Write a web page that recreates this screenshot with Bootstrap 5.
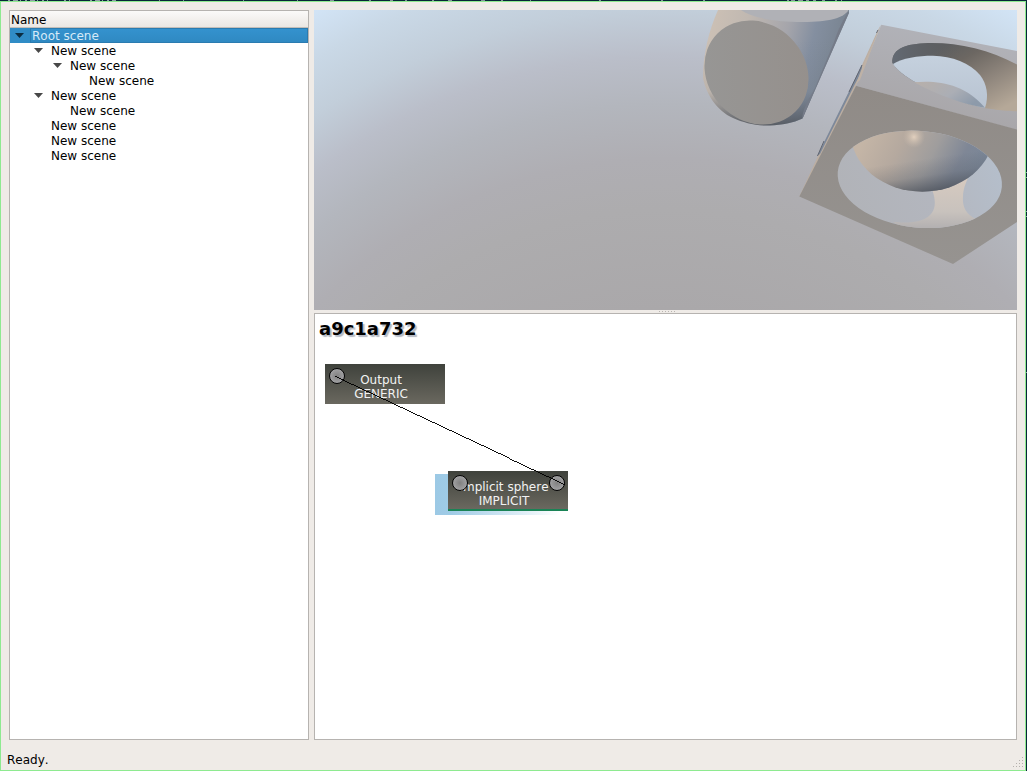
<!DOCTYPE html>
<html lang="en">
<head>
<meta charset="utf-8">
<title>Scene editor</title>
<link rel="stylesheet" href="https://cdn.jsdelivr.net/npm/bootstrap@5.3.0/dist/css/bootstrap.min.css">
<style>
body{font:12px/15px "DejaVu Sans",sans-serif;font-kerning:none;color:#000;background:#062637;overflow:hidden}
.desk-edge{height:1px;background:#062637}
.desk-edge svg{display:block}
.desk-side{width:1px}
.win{width:1026px;height:770px;border:1px solid #8eea90;background:#efebe7;padding:8px 8px 0}
.work{height:730px;gap:5px;flex:none}
.tree-pane{width:300px;border:1px solid #b6b3b0;background:#fff}
.tree-head{height:17px;line-height:18px;padding-left:1px;background:linear-gradient(#fbfaf9,#ebe7e3);border-bottom:1px solid #c3beb9}
.tree-row{height:15px;line-height:17px;white-space:nowrap;padding-left:calc(3px + var(--lv)*19px)}
.tree-row i{width:19px;height:15px;flex:none;display:flex;align-items:center;padding-left:2px}
.tree-row i svg{display:block}
.tree-row.sel{background:#308cc6;color:#d6eaf8}
.tree-row.sel span{flex:1;height:15px;border:1px solid #2a7bb0;margin-left:-2px;padding-left:1px;line-height:15px;background:linear-gradient(#3492ce,#2f89c2)}
.view3d{height:300px;display:block}
.split{height:3px}
.graph{border:1px solid #b6b3b0;background:#fff}
.graph h1{font-size:18px;font-weight:bold;line-height:22px;color:#000;margin:4px 0 0 4px;text-shadow:2px 2px 1px #b4bac4}
.gnode{width:120px;height:40px;background:linear-gradient(#3f423c,#6a685f);color:#f2f2f2;line-height:14px;padding:9px 8px 0 0}
.gnode.active{border-bottom:2px solid #1a8356}
.glow{width:125px;height:41px;background:linear-gradient(90deg,#9cc9e5,#9fcbe6 12%,#fff)}
.status{height:30px;line-height:15px;padding:13px 0 0 0;margin-left:-2px}
</style>
</head>
<body>
<div class="desk-edge"><svg width="1027" height="1"><path d="M8 .5H48M64 .5H70M90 .5H116" stroke="#8d9da5" stroke-dasharray="2 3 5 2 1 4"/><path d="M159 .5h1M183 .5h1M243 .5h1M297 .5h1M330 .5h4M369 .5h2M390 .5h3M405 .5h2M432 .5h2M448 .5h4M481 .5h4M501 .5h2M530 .5h1M599 .5h2M661 .5h2M703 .5h2M787 .5h2M791 .5h4M798 .5h5M806 .5h3M813 .5h3M822 .5h3M835 .5h2M841 .5h1" stroke="#84949c"/></svg></div>
<div class="d-flex">
<div class="win d-flex flex-column flex-shrink-0">
  <div class="work d-flex">
    <div class="tree-pane d-flex flex-column">
      <div class="tree-head">Name</div>
      <div class="tree-row sel d-flex" style="--lv:0"><i><svg width="9" height="5"><path d="M0 0H9L4.500 5Z" fill="#0b2c40"/></svg></i><span>Root scene</span></div>
      <div class="tree-row d-flex" style="--lv:1"><i><svg width="9" height="5"><path d="M0 0H9L4.500 5Z" fill="#484848"/></svg></i>New scene</div>
      <div class="tree-row d-flex" style="--lv:2"><i><svg width="9" height="5"><path d="M0 0H9L4.500 5Z" fill="#484848"/></svg></i>New scene</div>
      <div class="tree-row d-flex" style="--lv:3"><i></i>New scene</div>
      <div class="tree-row d-flex" style="--lv:1"><i><svg width="9" height="5"><path d="M0 0H9L4.500 5Z" fill="#484848"/></svg></i>New scene</div>
      <div class="tree-row d-flex" style="--lv:2"><i></i>New scene</div>
      <div class="tree-row d-flex" style="--lv:1"><i></i>New scene</div>
      <div class="tree-row d-flex" style="--lv:1"><i></i>New scene</div>
      <div class="tree-row d-flex" style="--lv:1"><i></i>New scene</div>
    </div>
    <div class="d-flex flex-column" style="width:703px">
      <svg class="view3d" width="703" height="300" viewBox="314 10 703 300">
        <defs>
          <radialGradient id="sky" gradientUnits="userSpaceOnUse" cx="665" cy="644" r="725">
            <stop offset="0" stop-color="#aaa8aa"/><stop offset=".46" stop-color="#aaa8aa"/><stop offset=".6" stop-color="#adacae"/><stop offset=".67" stop-color="#afaeb3"/><stop offset=".745" stop-color="#b3b6bd"/><stop offset=".81" stop-color="#babec9"/><stop offset=".875" stop-color="#c2ceda"/><stop offset=".94" stop-color="#c9d8e6"/><stop offset="1" stop-color="#d2e4f6"/>
          </radialGradient>
          <linearGradient id="cyl" gradientUnits="userSpaceOnUse" x1="704" y1="30" x2="835" y2="62">
            <stop offset="0" stop-color="#cdc1b5"/><stop offset=".3" stop-color="#c0b8b1"/><stop offset=".6" stop-color="#a5a5ab"/><stop offset=".8" stop-color="#848fa0"/><stop offset="1" stop-color="#7a8592"/>
          </linearGradient>
          <linearGradient id="cylDark" gradientUnits="userSpaceOnUse" x1="0" y1="40" x2="0" y2="126">
            <stop offset="0" stop-color="#59606a" stop-opacity="0"/><stop offset=".6" stop-color="#59606a" stop-opacity=".1"/><stop offset="1" stop-color="#50555c" stop-opacity=".9"/>
          </linearGradient>
          <linearGradient id="disc" x1="1" y1="0" x2="0" y2="1"><stop offset="0" stop-color="#958f8b"/><stop offset="1" stop-color="#979796"/></linearGradient>
          <linearGradient id="plate" gradientUnits="userSpaceOnUse" x1="930" y1="30" x2="915" y2="110"><stop offset="0" stop-color="#b1b2b8"/><stop offset="1" stop-color="#a9a7aa"/></linearGradient>
          <linearGradient id="bore" gradientUnits="userSpaceOnUse" x1="945" y1="45" x2="985" y2="118"><stop offset="0" stop-color="#5d5e5f"/><stop offset=".25" stop-color="#6c6762"/><stop offset=".6" stop-color="#8e857c"/><stop offset="1" stop-color="#b5a898"/></linearGradient>
          <linearGradient id="boreLeft" gradientUnits="userSpaceOnUse" x1="892" y1="0" x2="960" y2="0"><stop offset="0" stop-color="#636a74"/><stop offset="1" stop-color="#5b5d60" stop-opacity="0"/></linearGradient>
          <linearGradient id="front" gradientUnits="userSpaceOnUse" x1="0" y1="90" x2="0" y2="264"><stop offset="0" stop-color="#908b87"/><stop offset="1" stop-color="#969390"/></linearGradient>
          <linearGradient id="ball" gradientUnits="userSpaceOnUse" x1="872" y1="125" x2="975" y2="178"><stop offset="0" stop-color="#c4b5a6"/><stop offset=".3" stop-color="#b5a99f"/><stop offset=".58" stop-color="#9f9d9d"/><stop offset=".82" stop-color="#7f8796"/><stop offset="1" stop-color="#7a8697"/></linearGradient>
          <linearGradient id="ballShade" gradientUnits="userSpaceOnUse" x1="917" y1="160" x2="922" y2="193"><stop offset="0" stop-color="#555b65" stop-opacity="0"/><stop offset=".5" stop-color="#555b65" stop-opacity=".25"/><stop offset="1" stop-color="#50555e" stop-opacity=".85"/></linearGradient>
          <radialGradient id="spec"><stop offset="0" stop-color="#e2d0be"/><stop offset="1" stop-color="#c8b9aa" stop-opacity="0"/></radialGradient>
          <linearGradient id="stem" x1="0" y1="0" x2="0" y2="1"><stop offset="0" stop-color="#d8cbc0"/><stop offset=".65" stop-color="#c8c2bd"/><stop offset="1" stop-color="#aeacae"/></linearGradient>
          <linearGradient id="ballTop" x1="0" y1="0" x2="1" y2=".5"><stop offset="0" stop-color="#b8b0aa"/><stop offset=".6" stop-color="#abaeb5"/><stop offset="1" stop-color="#8d9aaa"/></linearGradient>
          <linearGradient id="holeSky" gradientUnits="userSpaceOnUse" x1="1000" y1="150" x2="850" y2="215"><stop offset="0" stop-color="#b5bfcc"/><stop offset=".5" stop-color="#b3b6be"/><stop offset="1" stop-color="#b1b3b8"/></linearGradient>
          <linearGradient id="farSky" x1="0" y1="0" x2="0" y2="1"><stop offset="0" stop-color="#c5d1de"/><stop offset="1" stop-color="#b8c3d1"/></linearGradient>
          <clipPath id="hole"><ellipse cx="919.8" cy="179.3" rx="82.4" ry="48.3" transform="rotate(5.3 919.8 179.3)"/></clipPath>
        </defs>
        <rect x="314" y="10" width="703" height="300" fill="url(#sky)"/>

        <g id="cylinder">
          <path d="M718 10C709 30 703 54 703 78C706 94 717 111 733 118C744 123 757 126 770 125.500C782 125 793 123 802.500 118.500L849 13V10Z" fill="url(#cyl)"/>
          <path d="M718 10C709 30 703 54 703 78C706 94 717 111 733 118C744 123 757 126 770 125.500C782 125 793 123 802.500 118.500L849 13V10Z" fill="url(#cylDark)"/>
          <path d="M849 12.500L802.500 118.500C802 112 806 104 815 88L834 42C838 30 842 22 848 12Z" fill="#757b88"/>
          <path d="M741 10C753 18 775 22 803 22C829 22 844 18 848.500 10Z" fill="#b0b1b6"/>
          <ellipse cx="756.500" cy="72.500" rx="55.200" ry="48.600" transform="rotate(45 756.500 72.500)" fill="url(#disc)"/>
        </g>

        <g id="box">
          <path d="M881 24.700L878 30L862 65L818 156L799.300 196.500L802 194L856 86Z" fill="#bcaea1"/>
          <path d="M862 65L817.500 155.500L820 154L855 84L862 71Z" fill="#7d899b"/>
          <path d="M862 65L849 92M878 30L876.500 33M817.500 156L824 141" stroke="#606570" fill="none"/>
          <path d="M881.300 24.700L1017 51V130L856 85.700Z" fill="url(#plate)"/>
          <path d="M880.500 25.500L862.500 66.500L856 84L860 80Z" fill="#bfb2a6"/>
          <path d="M892.500 63C891 47 910 43 932 43C960 43 990 50 1017 64.500V111.300C1004 111 985 108.500 983 107.500C963 104 942 95 917 83C904 76 896 69 892.500 63Z" fill="url(#bore)"/>
          <path d="M892.500 63C891 47 910 43 932 43C944 43 954 44 964 46V70H900Z" fill="url(#boreLeft)"/>
          <path d="M893 64C902 58 918 55.700 933 55.700C952 56 970 63 980 75C987 84 989 96 985 108C963 104 942 95 917 83C904 76 896 69 893 64Z" fill="url(#farSky)"/>
          <path d="M914 82.300C938 80 965 84 985 107.800C963 104 942 97 914 82.300Z" fill="url(#ballTop)"/>
          <path d="M856 85.700L1017 129.500V222L953 264L799.300 196.500Z" fill="url(#front)"/>
          <g clip-path="url(#hole)">
            <rect x="835" y="128" width="170" height="102" fill="url(#holeSky)"/>
            <path d="M928 180C937 198 939 214 922 220C909 224 899 222 893 222L910 232H972L981 221C968 217 962 209 963 197C963 188 967 180 970 174Z" fill="url(#stem)"/>
            <ellipse cx="922.300" cy="131.700" rx="71.700" ry="60" fill="url(#ball)"/>
            <ellipse cx="922.300" cy="131.700" rx="71.700" ry="60" fill="url(#ballShade)"/>
            <circle cx="914" cy="137" r="11" fill="url(#spec)"/>
          </g>
        </g>
      </svg>
      <div class="split d-flex justify-content-center"><svg width="16" height="3" style="margin-left:2px"><path d="M0 1.500H16" stroke="#b9b5b1" stroke-dasharray="1 2"/></svg></div>
      <div class="graph flex-grow-1 position-relative">
        <h1>a9c1a732</h1>
        <div class="gnode position-absolute text-center" style="left:10px;top:50px">Output<br>GENERIC</div>
        <div class="glow position-absolute" style="left:120px;top:160px"></div>
        <div class="gnode active position-absolute text-center text-nowrap" style="left:133px;top:157px">Implicit sphere<br>IMPLICIT</div>
        <svg class="position-absolute top-0 start-0" width="300" height="250" viewBox="315 314 300 250">
          <defs><radialGradient id="port"><stop offset="0" stop-color="#808080"/><stop offset="1" stop-color="#a3a3a5"/></radialGradient></defs>
          <g fill="url(#port)" stroke="#000"><circle cx="337" cy="376" r="7.500"/><circle cx="460" cy="483" r="7.500"/><circle cx="557" cy="483" r="7.500"/></g>
          <path d="M334.500 376.500L564.500 484.500" stroke="#000" stroke-width=".95" shape-rendering="crispEdges"/>
        </svg>
      </div>
    </div>
  </div>
  <div class="status d-flex justify-content-between">
    <span>Ready.</span>
    <svg width="12" height="12" style="margin:4px -7px 0 0"><path d="M10 .5h1M7 3.500h1M10 3.500h1M4 6.500h1M7 6.500h1M10 6.500h1M1 9.500h1M4 9.500h1M7 9.500h1M10 9.500h1" stroke="#b5b1ad"/></svg>
  </div>
</div>
<svg class="desk-side flex-shrink-0" width="1" height="770"><path d="M0 171.500h1M0 176.500h1M0 210.500h1M0 215.500h1M0 371.500h1" stroke="#8d9da5"/></svg>
</div>
<script src="https://cdn.jsdelivr.net/npm/bootstrap@5.3.0/dist/js/bootstrap.bundle.min.js"></script>
</body>
</html>
